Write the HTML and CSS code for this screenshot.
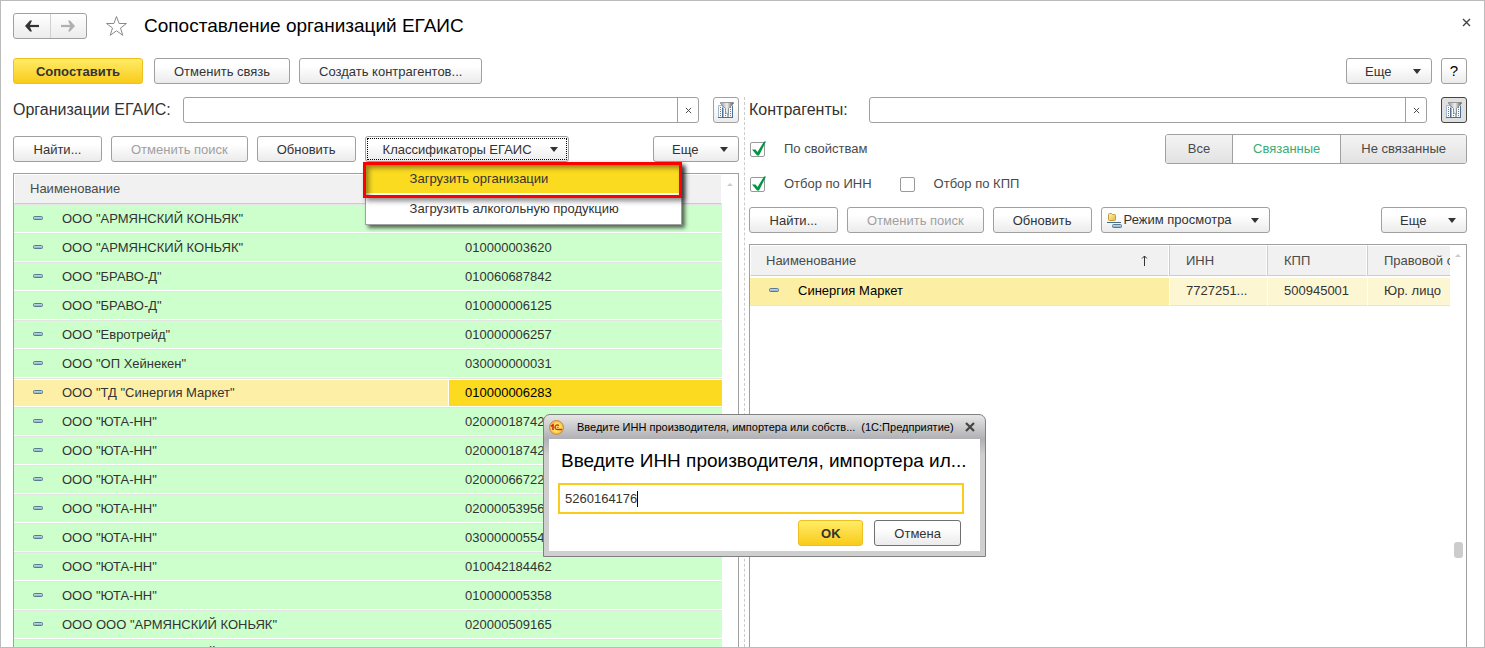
FILE: index.html
```html
<!DOCTYPE html>
<html lang="ru">
<head>
<meta charset="utf-8">
<title>Сопоставление организаций ЕГАИС</title>
<link rel="stylesheet" href="styles.css">
</head>
<body>
<svg class="defs" aria-hidden="true">
  <defs>
    <linearGradient id="bar-fill" x1="0" y1="0" x2="0" y2="1"><stop offset="0" stop-color="#d3e4f0"/><stop offset="1" stop-color="#7fa5bf"/></linearGradient>
    <linearGradient id="funnel-fill" x1="0" y1="0" x2="1" y2="0"><stop offset="0" stop-color="#9b9b9b"/><stop offset=".5" stop-color="#f0f0f0"/><stop offset="1" stop-color="#555"/></linearGradient>
    <linearGradient id="folder-fill" x1="0" y1="0" x2="1" y2="1"><stop offset="0" stop-color="#fdf3b4"/><stop offset="1" stop-color="#e5bd45"/></linearGradient>
    <radialGradient id="logo-fill"><stop offset="0" stop-color="#fff27a"/><stop offset=".6" stop-color="#ffe35a"/><stop offset="1" stop-color="#f3a93c"/></radialGradient>
    <symbol id="item" viewBox="0 0 10 4"><rect x=".5" y=".5" width="9" height="3" rx="1" fill="url(#bar-fill)" stroke="#58798f"/></symbol>
    <symbol id="filter" viewBox="0 0 16 16">
      <path d="M.5 3.500h4v12h-4zM5.500 5.500h4v10h-4zM10.500 3.500h4v12h-4z" fill="#f6fafd" stroke="#a3b8ca"/>
      <path d="M2.500 5v10M7.500 7v8M12.500 5v10" stroke="#5c80a3" stroke-dasharray="1 1"/>
      <path d="M0 15.500h15M14.500 4v12M4.500 6v10" stroke="#4d6f91" fill="none"/>
      <path d="M2.500.5h13v1l-5 5v6l-3-2v-4l-5-5z" fill="url(#funnel-fill)" stroke="#858585" stroke-width=".8"/>
    </symbol>
    <symbol id="cross" viewBox="0 0 8 8"><path d="M1 1l6 6M7 1l-6 6" stroke="currentColor" fill="none"/></symbol>
  </defs>
</svg>
<main class="window">
  <header class="title-row">
    <div class="history">
      <button type="button" aria-label="Назад"><svg width="16" height="12" viewBox="0 0 16 12"><path d="M15 6H4" fill="none" stroke="#333" stroke-width="2.200"/><path d="M1 6l5-5.500h2L5.500 6 8 11.500H6z" fill="#333"/></svg></button>
      <button type="button" aria-label="Вперед" disabled><svg width="16" height="12" viewBox="0 0 16 12"><path d="M1 6h11" fill="none" stroke="#b0b0b0" stroke-width="2.200"/><path d="M15 6L10 .5H8L10.500 6 8 11.500h2z" fill="#b0b0b0"/></svg></button>
    </div>
    <button type="button" class="bare" aria-label="В избранное"><svg width="23" height="22" viewBox="0 0 23 22"><path d="M11.500 1.500l2.600 7h7.400l-6 4.500 2.300 7.300-6.300-4.500-6.300 4.500L7.500 13l-6-4.500h7.400z" fill="#fff" stroke="#8a8a8a"/></svg></button>
    <h1>Сопоставление организаций ЕГАИС</h1>
    <button type="button" class="bare close" aria-label="Закрыть"><svg width="9" height="9" viewBox="0 0 9 9"><path d="M1 1l7 7M8 1L1 8" stroke="#444" stroke-width="1.400"/></svg></button>
  </header>

  <div class="toolbar commands">
    <button type="button" class="btn primary">Сопоставить</button>
    <button type="button" class="btn">Отменить связь</button>
    <button type="button" class="btn">Создать контрагентов...</button>
    <button type="button" class="btn more push">Еще<span class="arrow"></span></button>
    <button type="button" class="btn square">?</button>
  </div>

  <div class="panes">
    <section class="pane left">
      <div class="search">
        <label for="org">Организации ЕГАИС:</label>
        <div class="field"><input id="org" type="text"><button type="button" aria-label="Очистить"><svg width="7" height="7"><use href="#cross"/></svg></button></div>
        <button type="button" class="btn square" aria-label="Отбор"><svg width="16" height="16"><use href="#filter"/></svg></button>
      </div>
      <div class="toolbar">
        <button type="button" class="btn find">Найти...</button>
        <button type="button" class="btn" disabled>Отменить поиск</button>
        <button type="button" class="btn">Обновить</button>
        <div class="dropdown">
          <button type="button" class="btn focused">Классификаторы ЕГАИС<span class="arrow"></span></button>
          <div class="menu">
            <button type="button" class="active">Загрузить организации</button>
            <button type="button">Загрузить алкогольную продукцию</button>
            <div class="highlight"></div>
          </div>
        </div>
        <button type="button" class="btn more push">Еще<span class="arrow"></span></button>
      </div>
      <div class="list">
        <table>
          <colgroup><col class="c-name"><col></colgroup>
          <thead><tr><th colspan="2">Наименование</th></tr></thead>
          <tbody>
            <tr><td><svg class="item"><use href="#item"/></svg>ООО "АРМЯНСКИЙ КОНЬЯК"</td><td></td></tr>
            <tr><td><svg class="item"><use href="#item"/></svg>ООО "АРМЯНСКИЙ КОНЬЯК"</td><td>010000003620</td></tr>
            <tr><td><svg class="item"><use href="#item"/></svg>ООО "БРАВО-Д"</td><td>010060687842</td></tr>
            <tr><td><svg class="item"><use href="#item"/></svg>ООО "БРАВО-Д"</td><td>010000006125</td></tr>
            <tr><td><svg class="item"><use href="#item"/></svg>ООО "Евротрейд"</td><td>010000006257</td></tr>
            <tr><td><svg class="item"><use href="#item"/></svg>ООО "ОП Хейнекен"</td><td>030000000031</td></tr>
            <tr class="selected"><td><svg class="item"><use href="#item"/></svg>ООО "ТД "Синергия Маркет"</td><td class="current">010000006283</td></tr>
            <tr><td><svg class="item"><use href="#item"/></svg>ООО "ЮТА-НН"</td><td>020000187422</td></tr>
            <tr><td><svg class="item"><use href="#item"/></svg>ООО "ЮТА-НН"</td><td>020000187423</td></tr>
            <tr><td><svg class="item"><use href="#item"/></svg>ООО "ЮТА-НН"</td><td>020000667222</td></tr>
            <tr><td><svg class="item"><use href="#item"/></svg>ООО "ЮТА-НН"</td><td>020000539562</td></tr>
            <tr><td><svg class="item"><use href="#item"/></svg>ООО "ЮТА-НН"</td><td>030000005542</td></tr>
            <tr><td><svg class="item"><use href="#item"/></svg>ООО "ЮТА-НН"</td><td>010042184462</td></tr>
            <tr><td><svg class="item"><use href="#item"/></svg>ООО "ЮТА-НН"</td><td>010000005358</td></tr>
            <tr><td><svg class="item"><use href="#item"/></svg>ООО ООО "АРМЯНСКИЙ КОНЬЯК"</td><td>020000509165</td></tr>
            <tr><td><svg class="item"><use href="#item"/></svg>ООО ООО "АРМЯНСКИЙ КОНЬЯК"</td><td></td></tr>
          </tbody>
        </table>
        <div class="scroll"><span class="up"></span></div>
      </div>
    </section>

    <div class="splitter"></div>

    <section class="pane right">
      <div class="search">
        <label for="partner">Контрагенты:</label>
        <div class="field"><input id="partner" type="text"><button type="button" aria-label="Очистить"><svg width="7" height="7"><use href="#cross"/></svg></button></div>
        <button type="button" class="btn square pressed" aria-label="Отбор"><svg width="16" height="16"><use href="#filter"/></svg></button>
      </div>
      <div class="filters">
        <label class="check"><input type="checkbox" checked>По свойствам</label>
        <div class="segments push">
          <button type="button">Все</button>
          <button type="button" class="on">Связанные</button>
          <button type="button">Не связанные</button>
        </div>
      </div>
      <div class="filters low">
        <label class="check"><input type="checkbox" checked>Отбор по ИНН</label>
        <label class="check"><input type="checkbox">Отбор по КПП</label>
      </div>
      <div class="toolbar">
        <button type="button" class="btn find">Найти...</button>
        <button type="button" class="btn" disabled>Отменить поиск</button>
        <button type="button" class="btn">Обновить</button>
        <button type="button" class="btn view"><svg width="15" height="16" viewBox="0 0 15 16"><path d="M1.500 2.500q0-1 1-1h2l1 1h2q1 0 1 1v4q0 1-1 1h-5q-1 0-1-1z" fill="url(#folder-fill)" stroke="#c39a35"/><path d="M0 10.500h14" stroke="#45698a"/><rect x="5.500" y="12.500" width="9" height="3" rx="1" fill="url(#bar-fill)" stroke="#58798f"/></svg>Режим просмотра<span class="arrow"></span></button>
        <button type="button" class="btn more push">Еще<span class="arrow"></span></button>
      </div>
      <div class="list">
        <table>
          <colgroup><col><col class="c-inn"><col class="c-kpp"><col class="c-law"></colgroup>
          <thead><tr><th><div class="sorted">Наименование<svg width="7" height="11" viewBox="0 0 7 11"><path d="M3.500 11V1M1 3.500L3.500 1 6 3.500" fill="none" stroke="#333"/></svg></div></th><th>ИНН</th><th>КПП</th><th>Правовой с</th></tr></thead>
          <tbody><tr class="selected"><td class="main"><svg class="item"><use href="#item"/></svg>Синергия Маркет</td><td>7727251...</td><td>500945001</td><td>Юр. лицо</td></tr></tbody>
        </table>
        <div class="scroll"><span class="up"></span><span class="thumb"></span></div>
      </div>
    </section>
  </div>

  <div class="dialog" role="dialog" aria-labelledby="dialog-title">
    <div class="dialog-bar">
      <svg width="15" height="15" viewBox="0 0 15 15"><circle cx="7.500" cy="7.500" r="7" fill="url(#logo-fill)" stroke="#c98b50"/><path d="M2 6.300l2-1.500V10" fill="none" stroke="#d8221c" stroke-width="1.600"/><path d="M9.800 6Q9 4.500 7.500 5 5.500 6 6.200 8.300 6.800 9.500 8.500 9.500H13" fill="none" stroke="#d8221c" stroke-width="1.300"/><path d="M9.500 7.500q-1.500-.8-1.500.2" fill="none" stroke="#d8221c"/></svg>
      <span class="caption">Введите ИНН производителя, импортера или собств...</span>
      <span class="app">(1С:Предприятие)</span>
      <button type="button" class="bare" aria-label="Закрыть"><svg width="10" height="10" viewBox="0 0 10 10"><path d="M1 1l8 8M9 1L1 9" stroke="#444" stroke-width="2.200"/></svg></button>
    </div>
    <div class="dialog-body">
      <h2 id="dialog-title"><label for="inn">Введите ИНН производителя, импортера ил...</label></h2>
      <div class="inn-field"><input id="inn" type="text" value="5260164176" size="10"><span class="caret"></span></div>
      <div class="dialog-actions">
        <button type="button" class="btn primary">OK</button>
        <button type="button" class="btn cancel">Отмена</button>
      </div>
    </div>
  </div>
</main>
</body>
</html>
```
FILE: styles.css
```css
* { box-sizing: border-box; }

body {
  margin: 0;
  background: #fff;
  color: #333;
  font: 13px/16px "Liberation Sans", Arial, sans-serif;
}

button, input { font: inherit; color: inherit; margin: 0; }
button { padding: 0; }
svg { display: block; flex: none; }
.defs { position: absolute; width: 0; height: 0; }
.push { margin-left: auto; }

.window {
  position: relative;
  display: flex;
  flex-direction: column;
  height: 100vh;
  padding: 12px 17px 0 12px;
  border: 1px solid #bbb;
  overflow: hidden;
}

.title-row { display: flex; align-items: center; height: 26px; }
.history {
  display: flex;
  width: 74px;
  height: 26px;
  border: 1px solid #a0a0a0;
  border-radius: 3px;
  background: linear-gradient(#fff, #ececec);
}
.history button { display: grid; place-items: center; flex: 1; border: 0; background: none; }
.history button + button { border-left: 1px solid #d0d0d0; }
.bare { border: 0; background: none; }
.title-row .bare { margin-left: 18px; }
.title-row .close { margin: 0 -4px 7px auto; }
h1, h2 { margin: 0; color: #000; font-size: 19px; line-height: 22px; font-weight: 400; }
h1 { margin-left: 16px; }

.toolbar { display: flex; gap: 9px; }
.commands { margin: 19px 0 13px; }

.btn {
  display: flex;
  align-items: center;
  justify-content: center;
  height: 26px;
  padding: 1px 19px 0;
  border: 1px solid #a0a0a0;
  border-radius: 3px;
  background: linear-gradient(#fff 30%, #ebebeb);
  white-space: nowrap;
}
.btn:disabled { color: #a0a0a0; }
.btn.find { min-width: 89px; }
.btn.primary { min-width: 65px; border-color: #f0c020; background: linear-gradient(#ffec65, #f9cb1c); font-weight: 700; }
.commands .primary { min-width: 130px; margin-right: 2px; }
.btn.square { width: 26px; padding: 0; font-size: 15px; color: #000; }
.btn.pressed { border-color: #444; background: #e0e0e0; }
.btn.more { width: 86px; padding: 1px 10px 0 18px; justify-content: space-between; }
.btn.focused { width: 204px; padding: 1px 10px 0 17px; justify-content: space-between; outline: 1px dotted #000; outline-offset: -3px; }
.btn.view { width: 169px; padding: 0 10px 0 5px; }
.btn.view svg { margin-right: 2px; }
.btn.view .arrow { margin-left: auto; }
.arrow { border: 4px solid transparent; border-top: 5px solid #333; border-bottom: 0; }

.panes { flex: 1; display: grid; grid-template-columns: 726fr 10px 718fr; min-height: 0; }
.pane { display: flex; flex-direction: column; min-width: 0; min-height: 0; }
.splitter { width: 6px; border-right: 1px dashed #ccc; }

.search { display: flex; align-items: center; height: 26px; }
.search label { width: 170px; font-size: 16px; white-space: nowrap; }
.right .search label { width: 120px; }
.field { display: flex; flex: 1; height: 26px; margin-right: 14px; border: 1px solid #a0a0a0; border-radius: 3px; }
.field input { flex: 1; min-width: 0; border: 0; background: none; padding: 0 6px; }
.field button { display: grid; place-items: center; width: 21px; border: 0; border-left: 1px solid #a0a0a0; background: none; }
.left .toolbar { margin: 13px 0 11px; }
.right .toolbar { margin: 15px 0 11px; }

.dropdown { position: relative; }
.menu {
  position: absolute;
  z-index: 2;
  top: 27px;
  left: 0;
  width: 317px;
  border: 1px solid #a0a0a0;
  background: #fff;
  box-shadow: 3px 3px 4px #0009;
}
.menu button { display: block; width: 100%; height: 30px; padding: 0 44px; border: 0; background: none; text-align: left; }
.menu .active { background: #fadb20; border-bottom: 1px solid #fff; }
.highlight {
  position: absolute;
  inset: -2px -1px 26px -3px;
  border: 3px solid #f00;
  box-shadow: 3px 3px 5px #0007, inset 3px 3px 5px #0006;
  pointer-events: none;
}

.list { display: flex; flex: 1; min-height: 0; border: 1px solid #a0a0a0; border-bottom: 0; overflow: hidden; }
.scroll { display: flex; flex-direction: column; align-items: center; width: 16px; padding-top: 9px; }
.up { border: 3px solid transparent; border-bottom: 3px solid #ccc; border-top: 0; }
.thumb { width: 9px; height: 16px; margin-top: 285px; border-radius: 3px; background: #ccc; }

table { flex: 1; align-self: flex-start; width: 0; table-layout: fixed; border-collapse: separate; border-spacing: 0; }
.c-name { width: 434px; }
.c-inn { width: 98px; }
.c-kpp { width: 100px; }
.c-law { width: 83px; }
th, td { overflow: hidden; white-space: nowrap; text-align: left; }
th { height: 30px; padding: 0 15px; border: 1px solid #fff; border-bottom-color: #ccc; background: #f1f1f1; color: #4a4a4a; font-weight: 400; }
th + th { padding-left: 16px; border-left: 1px solid #ccc; }
td { height: 29px; padding: 1px 16px 0; border-top: 1px solid #e4e4e4; border-bottom: 1px solid #fff; background: #cfc; }
.item { display: inline-block; width: 10px; height: 4px; margin: 0 19px 0 3px; vertical-align: 3px; }
.selected td { background: #feefa7; box-shadow: inset 0 1px #fff; }
.selected .current { border-left: 1px solid #fff; background: #fbda20; color: #000; }
.left td + td { padding-left: 17px; }
.left .selected .current { padding-left: 16px; }
.right th { height: 31px; }
.right td { height: 30px; padding-top: 0; border-top-color: #fff; border-bottom-color: #e4e4e4; background: #fdf6d2; }
.right td + td { border-left: 1px solid #fff; }
.right .main { background: #fcefa4; color: #000; }
.right th:last-child { padding-right: 0; border-right: 0; text-overflow: clip; }
.sorted { display: flex; align-items: center; justify-content: space-between; padding-right: 5px; }

.filters { display: flex; align-items: center; gap: 27px; height: 30px; margin-top: 11px; }
.filters.low { height: 16px; margin-top: 12px; }
.check { display: flex; align-items: center; gap: 17px; color: #4a4a4a; }
.check input {
  appearance: none;
  width: 17px;
  height: 17px;
  margin-left: 1px;
  background: url("data:image/svg+xml,%3Csvg xmlns='http://www.w3.org/2000/svg' width='17' height='17'%3E%3Crect x='.5' y='1.500' width='14' height='14' rx='1.500' fill='white' stroke='%23999'/%3E%3C/svg%3E") no-repeat;
}
.check input:checked {
  background-image: url("data:image/svg+xml,%3Csvg xmlns='http://www.w3.org/2000/svg' width='17' height='17'%3E%3Crect x='.5' y='1.500' width='14' height='14' rx='1.500' fill='white' stroke='%23999'/%3E%3Cpath d='M2 8.500l3.500 0 2 2.500 6.500-10.500h2L9 14.500h-2z' fill='%23009646'/%3E%3C/svg%3E");
}
.segments { display: flex; height: 30px; border: 1px solid #a0a0a0; border-radius: 3px; overflow: hidden; }
.segments button { min-width: 66px; padding: 0 20px; border: 0; background: linear-gradient(#f4f4f4, #e2e2e2); color: #4a4a4a; }
.segments button + button { border-left: 1px solid #a0a0a0; }
.segments .on { background: #fff; color: #3cad72; }

.dialog {
  position: absolute;
  z-index: 3;
  top: 413px;
  left: 542px;
  width: 443px;
  padding: 0 5px 5px;
  border: 1px solid #808080;
  border-radius: 7px 7px 0 0;
  background: linear-gradient(#e6e6e6, #b0b0b4 24px, #cfcfd0 40px);
}
.dialog-bar { display: flex; align-items: center; height: 24px; color: #000; font-size: 11px; white-space: nowrap; }
.caption { margin-left: 13px; }
.app { margin-left: 6px; }
.dialog-bar .bare { margin-right: 5px; margin-left: auto; }
.dialog-body { padding: 11px 16px 5px 9px; background: #fff; }
h2 { padding-left: 3px; white-space: nowrap; }
.inn-field { display: flex; align-items: center; height: 31px; margin: 11px 0 6px; padding: 0 5px; border: 2px solid #f9cb1c; }
.inn-field input { width: 72px; padding: 0; border: 0; outline: 0; }
.caret { width: 1px; height: 16px; background: #000; }
.dialog-actions { display: flex; justify-content: flex-end; gap: 11px; padding-right: 3px; }
.cancel { border-color: #707070; }
```
